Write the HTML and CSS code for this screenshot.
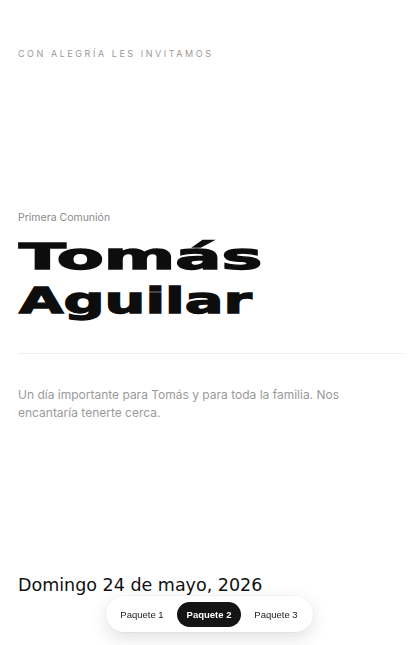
FILE: index.html
```html
<!DOCTYPE html>
<html lang="es">
<head>
<meta charset="utf-8">
<title>Primera Comunión - Tomás Aguilar</title>
<link rel="stylesheet" href="styles.css">
</head>
<body>
<main class="page">
  <p class="eyebrow">CON ALEGRÍA LES INVITAMOS</p>
  <section class="hero">
    <p class="kicker">Primera Comunión</p>
    <h1 class="name"><span class="name-line first">Tomás</span><span class="name-line second">Aguilar</span></h1>
    <hr class="divider">
    <p class="lead">Un día importante para Tomás y para toda la familia. Nos encantaría tenerte cerca.</p>
  </section>
  <section class="date-block">
    <h2 class="date">Domingo 24 de mayo, 2026</h2>
  </section>
</main>
<nav class="switcher">
  <button class="opt">Paquete 1</button>
  <button class="opt active">Paquete 2</button>
  <button class="opt">Paquete 3</button>
</nav>
</body>
</html>
```

FILE: styles.css
```css
* { box-sizing: border-box; }
html, body { margin: 0; padding: 0; background: #fff; }
body {
  font-family: Inter, "Liberation Sans", sans-serif;
  color: #111;
  overflow: hidden;
  height: 645px;
}
.page {
  padding: 0 16px 0 18px;
}
.eyebrow {
  margin: 0;
  padding-top: 48px;
  font-size: 9px;
  line-height: 12px;
  letter-spacing: 2.55px;
  color: #9a9a9a;
}
.hero {
  padding-top: 151px;
}
.kicker {
  margin: 0;
  font-size: 10.5px;
  line-height: 14px;
  color: #8a8a8a;
}
.name {
  margin: 10px 0 0;
  font-family: "DejaVu Sans", sans-serif;
  font-weight: 700;
  font-size: 35px;
  line-height: 44px;
  color: #0d0d0d;
  -webkit-text-stroke: 1.3px #0d0d0d;
}
.name-line {
  display: block;
  width: max-content;
  margin-left: 1px;
  transform-origin: left center;
  white-space: nowrap;
}
.name-line.first { transform: scaleX(1.96); }
.name-line.second { transform: scaleX(1.64); }
.divider {
  margin: 30px 0 0;
  border: 0;
  border-top: 1px solid #eeeeee;
}
.lead {
  margin: 32px 0 0;
  max-width: 335px;
  font-size: 12px;
  line-height: 18px;
  color: #9a9a9a;
}
.date-block {
  padding-top: 152px;
}
.date {
  margin: 0;
  font-family: "DejaVu Sans", sans-serif;
  font-weight: 400;
  font-size: 17.5px;
  line-height: 22px;
  color: #111;
}
.switcher {
  position: fixed;
  left: 106px;
  bottom: 13px;
  width: 207px;
  height: 36px;
  display: flex;
  align-items: center;
  gap: 3px;
  padding: 0 4px;
  background: #fff;
  border-radius: 18px;
  box-shadow: 0 6px 18px rgba(0,0,0,0.12), 0 0 0 1px rgba(0,0,0,0.03);
}
.opt {
  border: 0;
  background: transparent;
  font-family: "Liberation Sans", Arial, sans-serif;
  font-size: 9.5px;
  white-space: nowrap;
  color: #222;
  width: 64px;
  height: 25px;
  padding: 0;
  border-radius: 13px;
  cursor: pointer;
}
.opt.active {
  background: #141414;
  color: #fff;
  font-weight: 700;
}
```
